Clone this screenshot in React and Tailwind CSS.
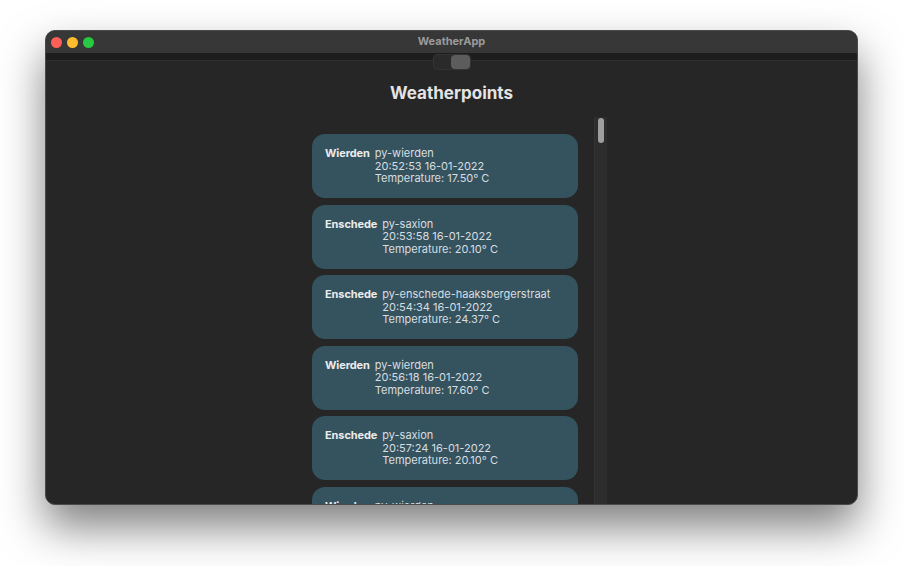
import React from "react";

const points = [
  { city: "Wierden", id: "py-wierden", time: "20:52:53 16-01-2022", temp: "17.50" },
  { city: "Enschede", id: "py-saxion", time: "20:53:58 16-01-2022", temp: "20.10" },
  { city: "Enschede", id: "py-enschede-haaksbergerstraat", time: "20:54:34 16-01-2022", temp: "24.37" },
  { city: "Wierden", id: "py-wierden", time: "20:56:18 16-01-2022", temp: "17.60" },
  { city: "Enschede", id: "py-saxion", time: "20:57:24 16-01-2022", temp: "20.10" },
  { city: "Wierden", id: "py-wierden", time: "20:58:30 16-01-2022", temp: "17.60" },
  { city: "Enschede", id: "py-saxion", time: "20:59:36 16-01-2022", temp: "20.10" },
];

function Card({ p }) {
  return (
    <div className="h-[64px] shrink-0 rounded-[13px] bg-[#35535e] pl-[13px] pt-[13px] flex gap-[5px] text-[11px] leading-[12.5px]">
      <div className="font-bold text-[#ececec] tracking-[-0.1px]">{p.city}</div>
      <div className="flex flex-col text-[#d8dee0]">
        <span>{p.id}</span>
        <span>{p.time}</span>
        <span>Temperature: {p.temp}° C</span>
      </div>
    </div>
  );
}

export default function App() {
  return (
    <div
      className="w-[904px] h-[566px] bg-white pt-[30px] pl-[45px] overflow-hidden"
      style={{ fontFamily: "Inter, 'Noto Sans', sans-serif" }}
    >
      <div className="w-[813px] h-[475px] rounded-[10px] border border-[#4a4a4a] bg-[#262626] shadow-[0_22px_44px_rgba(0,0,0,0.5)] overflow-hidden flex flex-col">
        {/* title bar */}
        <div className="h-[22px] shrink-0 bg-[#373737] relative flex items-center pl-[5px]">
          <div className="flex gap-[5px]">
            <div className="w-[11px] h-[11px] rounded-full bg-[#fe5f57]" />
            <div className="w-[11px] h-[11px] rounded-full bg-[#febc2e]" />
            <div className="w-[11px] h-[11px] rounded-full bg-[#28c840]" />
          </div>
          <div className="flex-1 text-center text-[11px] font-bold text-[#9b9b9b] pr-[48px] -mt-[1px]">WeatherApp</div>
        </div>
        {/* toolbar strip */}
        <div className="h-[8px] shrink-0 bg-[#1d1d1d] border-b border-[#303030]" />
        <div className="flex justify-center -mt-[7px] relative">
          <div className="w-[38px] h-[16px] rounded-[4px] bg-[#2a2a2a] border border-[#333] flex justify-end">
            <div className="w-[19px] h-full rounded-[4px] bg-[#5c5c5c]" />
          </div>
        </div>
        <div className="text-center text-[17px] font-bold text-[#e4e4e4] mt-[13px] leading-[20px]">
          Weatherpoints
        </div>
        <div className="flex-1 flex justify-center mt-[14px] min-h-0">
          <div className="w-[311px] flex min-h-0">
            <div className="flex-1 px-[16px] pt-[17px] flex flex-col gap-[6.6px] overflow-hidden">
              {points.map((p, i) => (
                <Card key={i} p={p} />
              ))}
            </div>
            <div className="w-[13px] bg-[#2d2d2d] border-l border-[#333] flex justify-center pt-[1px]">
              <div className="w-[6px] h-[25px] rounded-full bg-[#9e9e9e]" />
            </div>
          </div>
        </div>
      </div>
    </div>
  );
}
